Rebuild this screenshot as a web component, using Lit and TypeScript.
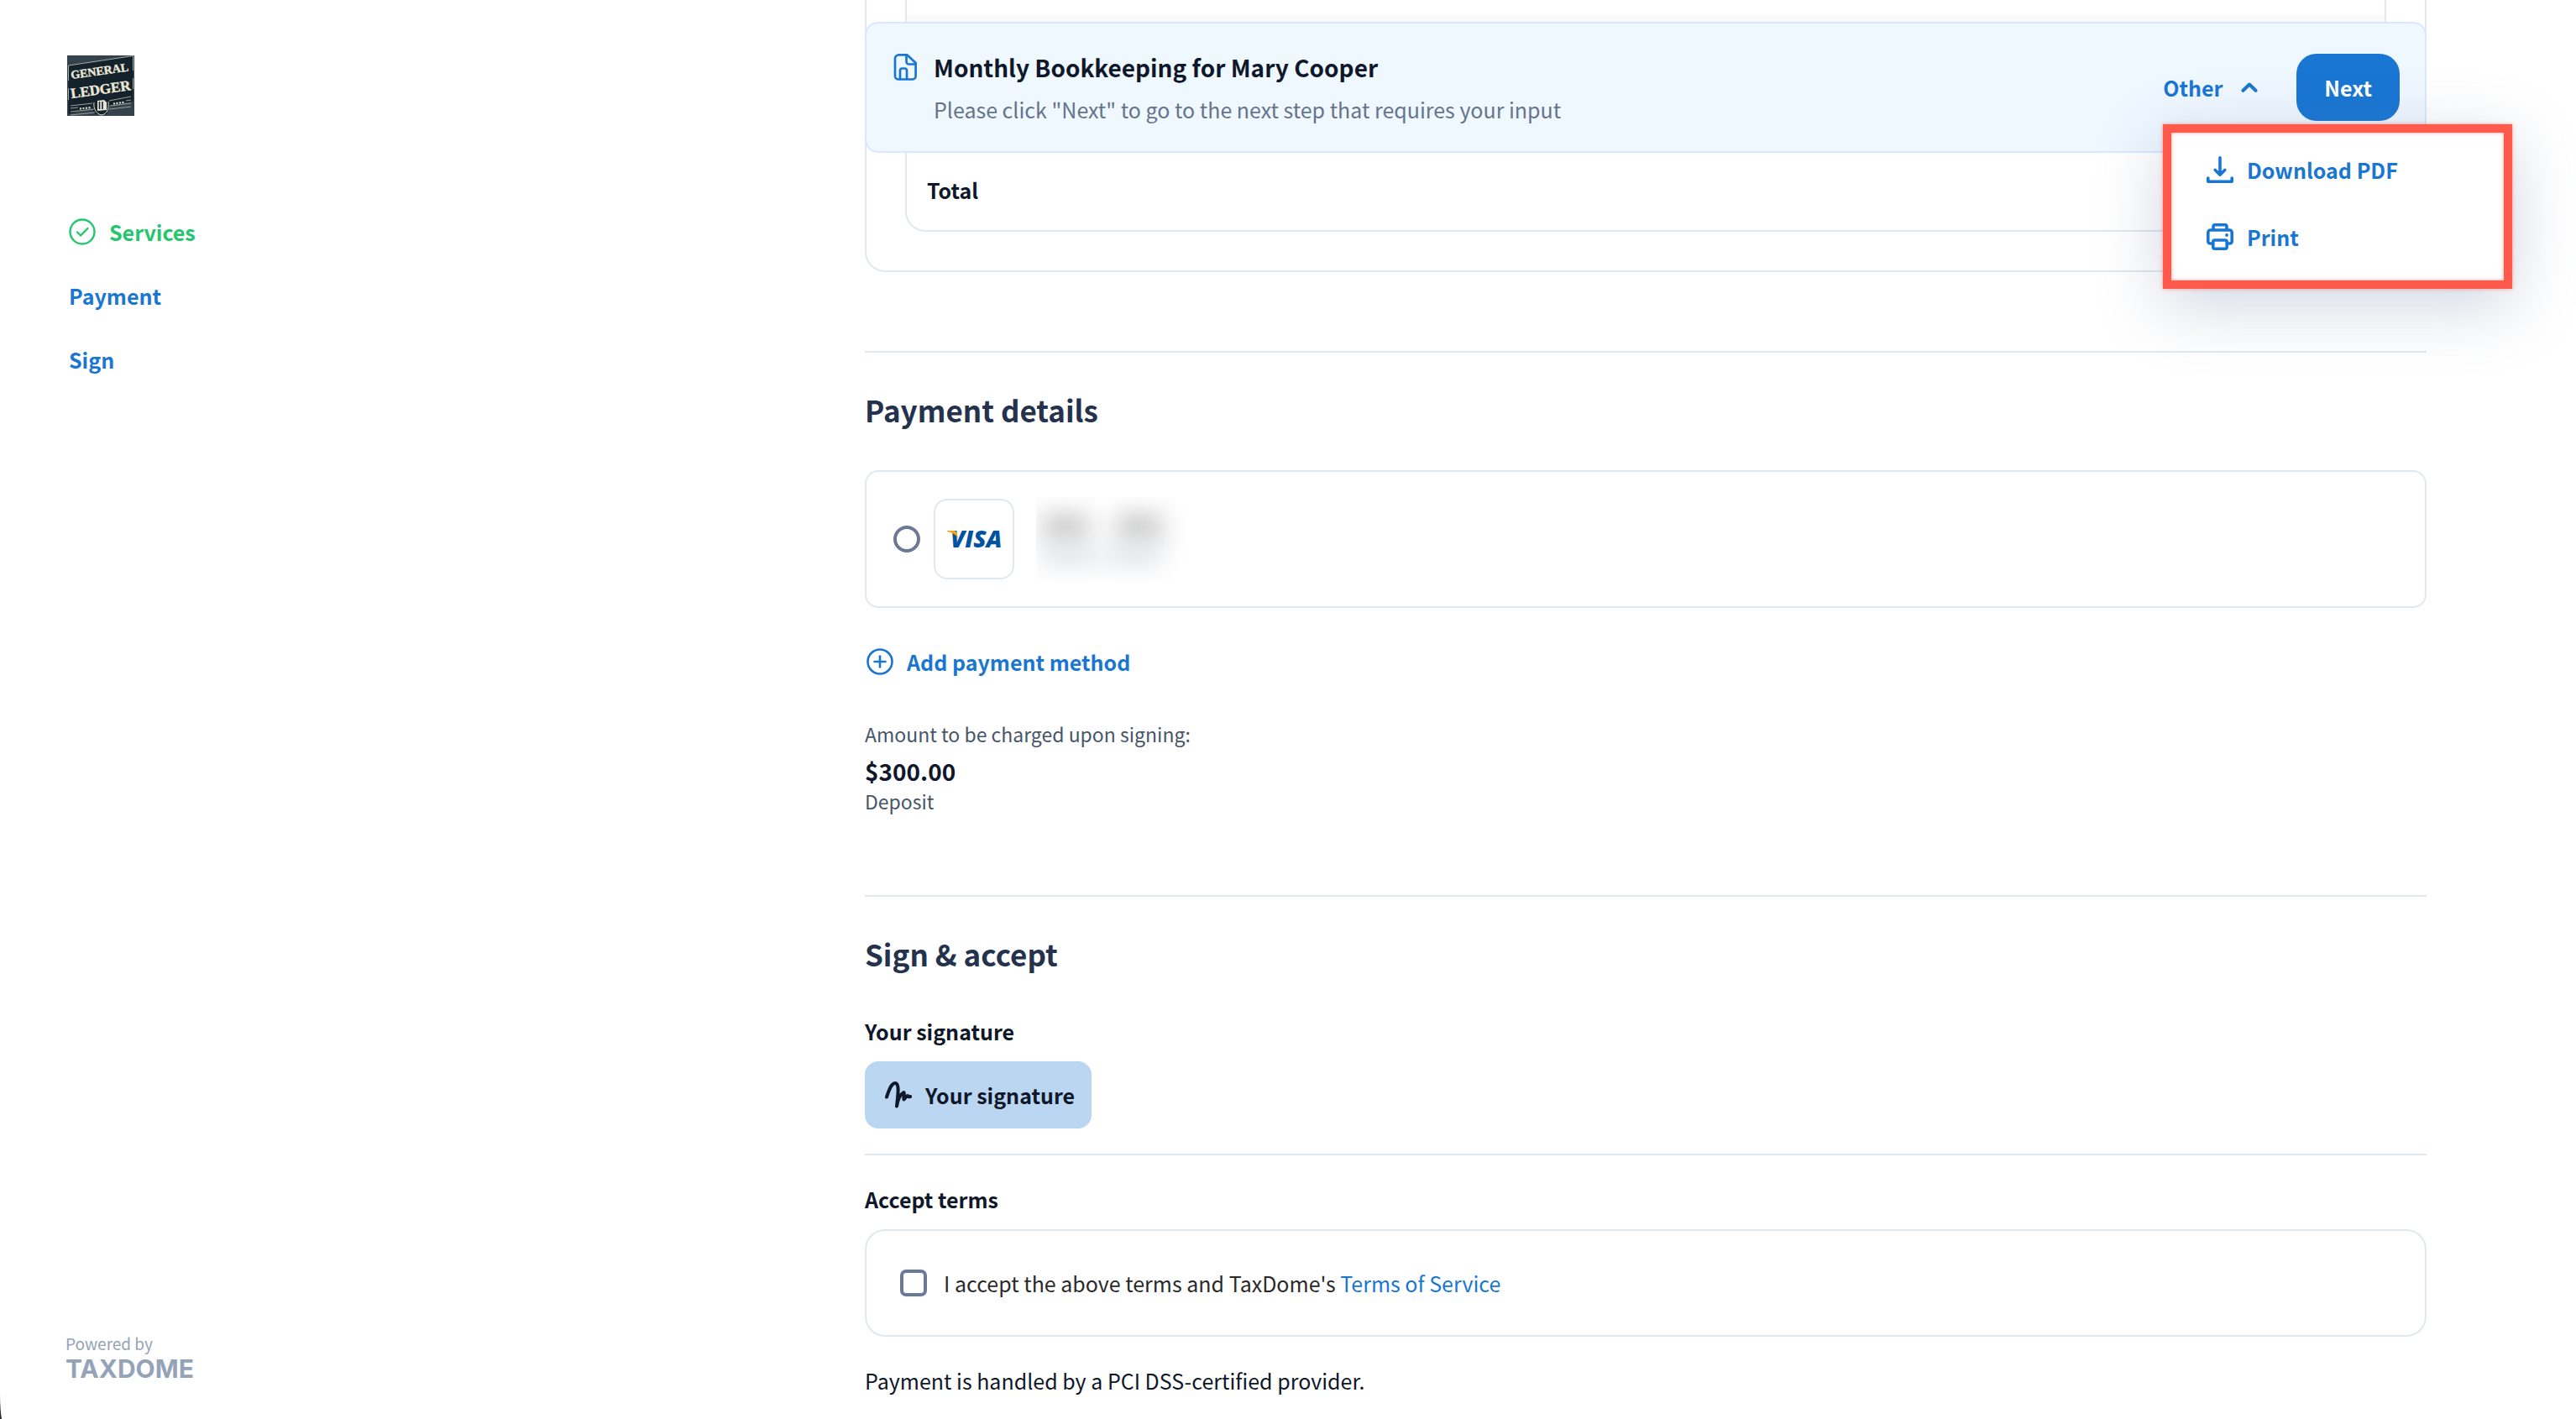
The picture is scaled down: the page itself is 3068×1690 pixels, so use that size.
import { LitElement, html, css, svg, nothing } from "lit";
import { customElement, state } from "lit/decorators.js";

const icon = (body: unknown, cls = "") => html`
  <svg class="icon ${cls}" viewBox="0 0 32 32" fill="none" stroke="currentColor" stroke-width="3.6"
    stroke-linecap="round" stroke-linejoin="round" aria-hidden="true">${body}</svg>`;

const checkCircle = svg`<g stroke-width="2.4"><circle cx="16" cy="16" r="14.5"/><path d="M10 16.5l4 4 8.500-8.500"/></g>`;
const plusCircle = svg`<g stroke-width="2.6"><circle cx="16" cy="16" r="14.5"/><path d="M16 9.500v13M9.500 16h13"/></g>`;
const fileDoc = svg`<g stroke-width="2.7"><path d="M8 1.400h10.500l10.100 9.600v15.500a4 4 0 0 1-4 4H8a4 4 0 0 1-4-4v-21a4 4 0 0 1 4-4z"/><path d="M17.500 2v7.500a3 3 0 0 0 3 3h8M10 30V20a2.500 2.500 0 0 1 2.500-2.500h3A2.500 2.500 0 0 1 18 20v10"/></g>`;
const download = svg`<path d="M16 1.800v20M10.200 16.500l5.800 5.600 5.800-5.600M1.800 26v4.200h28.400V26"/>`;
const printer = svg`<path d="M8 7.500V3.800a2 2 0 0 1 2-2h12a2 2 0 0 1 2 2v3.700M7.500 24H4.300a2.500 2.500 0 0 1-2.500-2.500V11a3 3 0 0 1 3-3h22.400a3 3 0 0 1 3 3v10.500a2.500 2.500 0 0 1-2.500 2.500h-3.200"/><rect x="7.800" y="20" width="16.400" height="10.200" rx="2"/><circle cx="24" cy="14" r="1.900" fill="currentColor" stroke="none"/>`;
const signature = svg`<path d="M2 18.500C4.500 11 7.500 2 12 2c5.500 0 3.500 13 2 27.500C15 23 18 15.500 22.500 13c1 1.500-.5 4.500 0 8.500 2-1.500 2.500-4.500 4.500-4.500.5 1.500 1.500 1.500 3.200 1" stroke-width="4"/>`;

@customElement("app-root")
export class AppRoot extends LitElement {
  @state() private menuOpen = true;

  static styles = css`
    :host {
      display: block;
      background: #fff;
      color: #0f172a;
      font: 400 25px/40px "Noto Sans CJK SC", "Open Sans", sans-serif;
    }
    *, *::before, *::after { box-sizing: border-box; }
    h1, h2, h3, p, ul { margin: 0; padding: 0; font-size: inherit; }
    button { font: inherit; border: 0; background: none; padding: 0; margin: 0; cursor: pointer; }
    a { color: #1976d2; text-decoration: none; }
    .icon { width: 32px; height: 32px; flex: none; display: block; }

    .page {
      display: grid;
      grid-template-columns: 1030px minmax(0, 1fr);
      min-height: 100vh;
      padding-right: 178px;
      position: relative;
      overflow: hidden;
    }
    .corner { position: absolute; left: 0; bottom: 0; width: 3px; height: 30px; }

    .side { display: flex; flex-direction: column; padding: 66px 78px 44px; }
    .logo { width: 80px; height: 72px; display: block; margin-left: 2px; }
    .steps { list-style: none; display: grid; gap: 36px; margin-top: 118px; font-weight: 700; }
    .steps a { display: flex; align-items: center; gap: 16px; padding-left: 4px; }
    .steps .done { color: #22c66d; }
    .powered { margin-top: auto; color: #94a3b8; font-size: 19px; line-height: 28px; }
    .brand { display: block; font: 700 30px/32px Inter, sans-serif; }

    .main { padding-bottom: 26px; }
    .proposal {
      position: relative;
      z-index: 1;
      border: 2px solid #e2e8f0;
      border-top: 0;
      border-radius: 0 0 24px 24px;
      padding: 0 46px 46px;
    }
    .sheet {
      border: 2px solid #e2e8f0;
      border-top: 0;
      border-radius: 0 0 24px 24px;
      padding-top: 18px;
    }
    .band { height: 160px; background: #f8fafc; }
    .total { padding: 28px 24px; font-weight: 700; }

    .banner {
      position: absolute;
      top: 26px;
      left: -2px;
      right: -2px;
      display: flex;
      align-items: flex-start;
      padding: 36px 30px;
      height: 156px;
      background: #eff7ff;
      border: 2px solid #d8e9fb;
      border-radius: 16px;
    }
    .doc { color: #1976d2; margin-right: 18px; }
    .intro { flex: 1; display: grid; gap: 16px; }
    .intro h1 { font-size: 28px; line-height: 32px; font-weight: 700; }
    .intro p { line-height: 36px; color: #64748b; }
    .other {
      display: flex;
      align-items: center;
      gap: 22px;
      height: 80px;
      margin-right: 46px;
      color: #1976d2;
      font-weight: 700;
    }
    .chevron { width: 20px; height: 12px; }
    .next {
      height: 80px;
      padding: 0 33px;
      border-radius: 24px;
      background: #1976d2;
      color: #fff;
      font-weight: 700;
    }
    .menu {
      position: absolute;
      top: 120px;
      right: -104px;
      width: 416px;
      height: 196px;
      padding: 4px 42px;
      background: #fff;
      border: 10px solid #ff5a4c;
      box-shadow: 0 0 4px rgba(255, 90, 76, 0.6), inset 0 0 4px rgba(255, 90, 76, 0.6),
        0 20px 80px rgba(90, 108, 150, 0.28);
      list-style: none;
    }
    .menu button {
      display: flex;
      align-items: center;
      gap: 16px;
      height: 80px;
      color: #1976d2;
      font-weight: 700;
    }

    .section { margin-top: 94px; padding-top: 44px; border-top: 2px solid #e2e8f0; }
    .section h2 {
      font-size: 35px;
      line-height: 48px;
      font-weight: 700;
      color: #24324d;
      margin-bottom: 48px;
    }
    .method {
      display: flex;
      align-items: center;
      height: 164px;
      padding: 0 32px;
      border: 2px solid #e2e8f0;
      border-radius: 16px;
    }
    .tick {
      appearance: none;
      width: 32px;
      height: 32px;
      flex: none;
      margin: 0;
      border: 4px solid #6b7a94;
      background: #fff;
    }
    .radio { border-radius: 50%; margin-right: 16px; }
    .card-type {
      display: grid;
      place-items: center;
      width: 96px;
      height: 96px;
      border: 2px solid #e2e8f0;
      border-radius: 16px;
      margin-right: 26px;
    }
    .visa { width: 80px; height: 48px; display: block; }
    .masked {
      width: 180px;
      height: 100px;
      overflow: hidden;
      display: grid;
      align-content: center;
      gap: 8px;
      padding-left: 8px;
    }
    .masked-row { display: flex; gap: 34px; filter: blur(15px); }
    .masked-row.soft { gap: 12px; }
    .blob { width: 54px; height: 30px; background: #c4c4c4; }
    .soft .blob { width: 64px; height: 20px; background: #d9dce2; }
    .add {
      display: flex;
      align-items: center;
      gap: 16px;
      margin: 44px 0 48px;
      padding-left: 2px;
      color: #1976d2;
      font-weight: 700;
    }
    .note { font-size: 23px; line-height: 36px; color: #475569; }
    .amount { margin-top: 8px; font-size: 28px; line-height: 36px; font-weight: 700; }

    .section h3 { line-height: 40px; font-weight: 700; margin-bottom: 16px; }
    .sign {
      display: flex;
      align-items: center;
      gap: 16px;
      height: 80px;
      padding: 0 20px 0 24px;
      border-radius: 16px;
      background: #bad6f1;
      color: #0f172a;
      font-weight: 700;
    }
    .terms { margin-top: 30px; padding-top: 32px; border-top: 2px solid #e2e8f0; }
    .accept {
      display: flex;
      align-items: center;
      height: 128px;
      padding: 0 40px;
      border: 2px solid #e2e8f0;
      border-radius: 24px;
      color: #2a2a2a;
      margin-bottom: 32px;
    }
    .box { border-radius: 7px; margin-right: 20px; }
  `;

  private renderLogo() {
    return html`<svg class="logo" viewBox="0 0 80 72" role="img" aria-label="General Ledger">
      <rect width="80" height="72" fill="#33424d"/>
      <path d="M1.500 12L78.500.500v54L50 59.500 47 70H33l-4-8L1.500 70z" fill="#14222c"/>
      <path d="M1.500 30V12L78.500.500V18M1.500 39v14M78.500 40V27" fill="none" stroke="#a9aca0" stroke-width="1"/>
      <g fill="#ece8d8" stroke="#ece8d8" stroke-width=".4" font-family="Liberation Serif, serif" font-weight="700">
        <text x="5" y="28" font-size="14" transform="rotate(-8 5 28)">GENERAL</text>
        <text x="5" y="51" font-size="17" transform="rotate(-8 5 51)">LEDGER</text>
      </g>
      <g fill="none" stroke="#9ba096" stroke-width="1">
        <path d="M4 60l26-3M4 63l9-1M4 67l28-3M4 71l29-3M50 54l26-5M70 54l6-1M51 60l25-3M50 64l26-3"/>
        <path d="M32 56c-1 8 3 14 9 15 6-1 9-7 8-16" stroke="#d8d5c6"/>
        <path d="M15 63.500l13-1.500M55 57.500l14-2" stroke="#e6e2d2" stroke-width="2" stroke-dasharray="2 1.500"/>
      </g>
      <path d="M36 54l8-1 3 3v9l-11 1z" fill="#e8e6da"/>
      <path d="M38.500 55v9M42 55v9" stroke="#14222c" stroke-width="1.600"/>
    </svg>`;
  }

  private renderMenu() {
    return html`<ul class="menu" id="other-menu">
      <li><button type="button">${icon(download)}Download PDF</button></li>
      <li><button type="button">${icon(printer)}Print</button></li>
    </ul>`;
  }

  render() {
    return html`
      <div class="page">
        <aside class="side">
          ${this.renderLogo()}
          <nav>
            <ul class="steps">
              <li><a class="done" href="#services">${icon(checkCircle)}Services</a></li>
              <li><a href="#payment">Payment</a></li>
              <li><a href="#sign">Sign</a></li>
            </ul>
          </nav>
          <div class="powered">Powered by <span class="brand">TAXDOME</span></div>
        </aside>

        <main class="main">
          <section class="proposal" id="services">
            <div class="sheet">
              <div class="band"></div>
              <div class="total">Total</div>
            </div>
            <header class="banner">
              ${icon(fileDoc, "doc")}
              <div class="intro">
                <h1>Monthly Bookkeeping for Mary Cooper</h1>
                <p>Please click "Next" to go to the next step that requires your input</p>
              </div>
              <button class="other" type="button" aria-controls="other-menu"
                aria-expanded=${this.menuOpen ? "true" : "false"}
                @click=${() => (this.menuOpen = !this.menuOpen)}>
                Other
                <svg class="chevron" viewBox="0 0 20 12" fill="none" stroke="currentColor" stroke-width="4"
                  stroke-linecap="round" stroke-linejoin="round" aria-hidden="true"><path d="M2.500 9.800L10 2.500l7.500 7.300"/></svg>
              </button>
              <button class="next" type="button">Next</button>
              ${this.menuOpen ? this.renderMenu() : nothing}
            </header>
          </section>

          <section class="section" id="payment">
            <h2>Payment details</h2>
            <div class="method">
              <input class="tick radio" type="radio" name="method" aria-label="Visa card">
              <span class="card-type">
                <svg class="visa" viewBox="0 0 80 48" aria-hidden="true">
                  <text x="12" y="34" font-family="Open Sans, sans-serif" font-size="28" font-weight="800"
                    font-style="italic" fill="#00539f">VISA</text>
                  <path d="M8 14h8q3 0 4 4l1 5Q18 17 8 15z" fill="#f9a21b"/>
                </svg>
              </span>
              <span class="masked" aria-hidden="true">
                <span class="masked-row"><i class="blob"></i><i class="blob"></i></span>
                <span class="masked-row soft"><i class="blob"></i><i class="blob"></i></span>
              </span>
            </div>
            <button class="add" type="button">${icon(plusCircle)}Add payment method</button>
            <p class="note">Amount to be charged upon signing:</p>
            <p class="amount">$300.00</p>
            <p class="note">Deposit</p>
          </section>

          <section class="section" id="sign">
            <h2>Sign &amp; accept</h2>
            <h3>Your signature</h3>
            <button class="sign" type="button">${icon(signature)}Your signature</button>
            <div class="terms">
              <h3>Accept terms</h3>
              <div class="accept">
                <input class="tick box" type="checkbox" id="accept">
                <label for="accept">I accept the above terms and TaxDome's <a href="#terms">Terms of Service</a></label>
              </div>
              <p>Payment is handled by a PCI DSS-certified provider.</p>
            </div>
          </section>
        </main>
        <svg class="corner" viewBox="0 0 3 30" aria-hidden="true"><path d="M0 0Q0 18 2 30H0z" fill="#2b2b2e"/></svg>
      </div>
    `;
  }
}
